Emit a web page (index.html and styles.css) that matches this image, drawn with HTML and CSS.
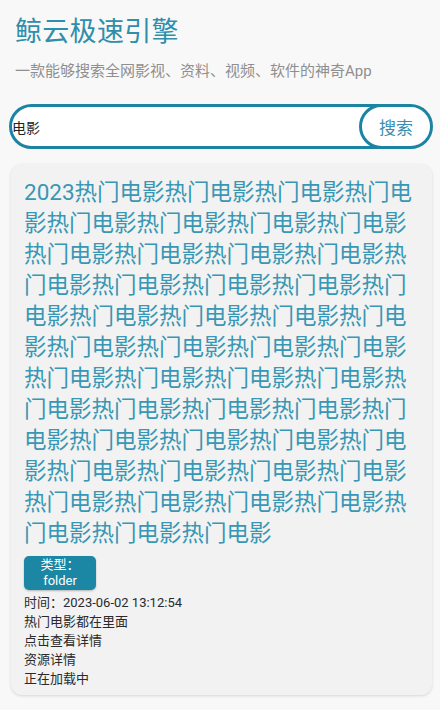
FILE: index.html
```html
<!DOCTYPE html>
<html lang="zh">
<head>
<meta charset="utf-8">
<link rel="stylesheet" href="styles.css">
</head>
<body>
<div class="page">
  <header class="header">
    <h1 class="title">鲸云极速引擎</h1>
    <p class="subtitle">一款能够搜索全网影视、资料、视频、软件的神奇App</p>
  </header>
  <div class="search">
    <div class="search-input">电影</div>
    <button class="search-btn">搜索</button>
  </div>
  <div class="card">
    <div class="card-title">2023热门电影热门电影热门电影热门电影热门电影热门电影热门电影热门电影热门电影热门电影热门电影热门电影热门电影热门电影热门电影热门电影热门电影热门电影热门电影热门电影热门电影热门电影热门电影热门电影热门电影热门电影热门电影热门电影热门电影热门电影热门电影热门电影热门电影热门电影热门电影热门电影热门电影热门电影热门电影热门电影热门电影热门电影热门电影热门电影热门电影热门电影热门电影热门电影热门电影</div>
    <div class="tag">类型：<br>folder</div>
    <div class="meta">
      <div>时间：2023-06-02 13:12:54</div>
      <div>热门电影都在里面</div>
      <div>点击查看详情</div>
      <div>资源详情</div>
      <div>正在加载中</div>
    </div>
  </div>
</div>
</body>
</html>
```

FILE: styles.css
```css
html, body {
  margin: 0;
  padding: 0;
  background: #f8f8f8;
}
body {
  font-family: Roboto, "Noto Sans CJK SC", sans-serif;
  width: 440px;
  height: 710px;
  overflow: hidden;
}
.page {
  padding: 0 7px 0 9px;
  display: flex;
  flex-direction: column;
}
.header {
  padding: 13px 0 0 6px;
}
.title {
  margin: 0;
  font-size: 27px;
  font-weight: 400;
  color: #2f8eab;
  line-height: 38px;
  letter-spacing: 0.3px;
}
.subtitle {
  margin: 10px 0 0 0;
  font-size: 15px;
  color: #8f8f8f;
  line-height: 20px;
}
.search {
  margin-top: 23px;
  height: 45px;
  box-sizing: border-box;
  border: 3px solid #1b84a3;
  border-radius: 23px;
  background: #fff;
  display: flex;
  align-items: stretch;
  overflow: hidden;
}
.search-input {
  flex: 1;
  display: flex;
  align-items: center;
  padding-left: 0;
  font-size: 14px;
  color: #222;
}
.search-btn {
  width: 74px;
  margin: -3px -3px -3px 0;
  border: 3px solid #1b84a3;
  border-radius: 23px;
  background: #fff;
  color: #3a8fb0;
  font-family: Roboto, "Noto Sans CJK SC", sans-serif;
  font-size: 17px;
  padding: 0;
}
.card {
  margin: 15px 1px 0 2px;
  background: #f2f2f2;
  border-radius: 11px;
  box-shadow: 0 1px 3px rgba(0,0,0,0.14);
  padding: 13px 12px 12px 13px;
  height: 531px;
  box-sizing: border-box;
}
.card-title {
  font-size: 22.5px;
  line-height: 31px;
  color: #3797b4;
  word-break: break-all;
}
.tag {
  margin-top: 7px;
  width: 72px;
  height: 34px;
  box-sizing: border-box;
  background: #1b87a5;
  color: #fff;
  border-radius: 5px;
  font-size: 13px;
  line-height: 16px;
  text-align: center;
  padding-top: 1px;
  box-shadow: 0 1px 2px rgba(0,0,0,0.25);
}
.meta {
  margin-top: 3px;
  font-size: 13px;
  line-height: 19px;
  color: #2a2a2a;
}
```
